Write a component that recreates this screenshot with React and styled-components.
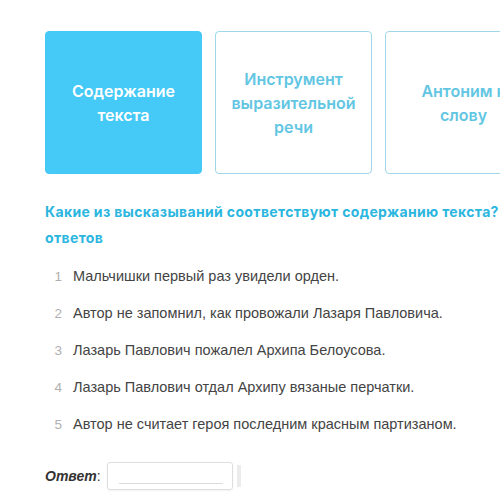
import React from "react";
import styled, { createGlobalStyle } from "styled-components";

const GlobalStyle = createGlobalStyle`
  html, body {
    margin: 0;
    padding: 0;
    background: #fff;
    overflow: hidden;
  }
`;

const Page = styled.div`
  width: 500px;
  height: 501px;
  padding: 31px 0 0 45px;
  box-sizing: border-box;
  overflow: hidden;
`;

const Tabs = styled.div`
  display: flex;
  gap: 13px;
  width: 700px;
`;

const Tab = styled.div`
  flex: 0 0 auto;
  width: 157px;
  height: 143px;
  box-sizing: border-box;
  border-radius: 4px;
  border: 1px solid ${p => (p.active ? "#45c9f6" : "#9fd8ea")};
  background: ${p => (p.active ? "#45c9f6" : "#fff")};
  color: ${p => (p.active ? "#fff" : "#62c6e3")};
  display: flex;
  align-items: center;
  justify-content: center;
  text-align: center;
  font-family: Inter, "Open Sans", sans-serif;
  font-weight: 600;
  font-size: 16px;
  line-height: 24px;
  padding: 0 17px;
`;

const Question = styled.div`
  margin-top: 25px;
  width: 480px;
  font-family: Inter, "Open Sans", sans-serif;
  font-weight: 700;
  font-size: 14px;
  letter-spacing: 0.35px;
  line-height: 26px;
  color: #2bb6df;
  white-space: nowrap;
`;

const List = styled.ol`
  list-style: none;
  margin: 7px 0 0;
  padding: 0;
`;

const Item = styled.li`
  display: flex;
  align-items: baseline;
  height: 37px;
  line-height: 37px;
  font-family: "Liberation Sans", Arial, sans-serif;
  font-size: 14.5px;
  color: #444;
`;

const Num = styled.span`
  width: 17px;
  text-align: right;
  margin-right: 11px;
  font-size: 13.5px;
  color: #b0b0b0;
`;

const Answer = styled.div`
  display: flex;
  align-items: center;
  margin-top: 19px;
  font-family: "Liberation Sans", Arial, sans-serif;
`;

const Label = styled.span`
  font-size: 14px;
  font-weight: 700;
  font-style: italic;
  color: #333;
  em {
    font-weight: 400;
    font-style: normal;
  }
`;

const Field = styled.div`
  margin-left: 6px;
  width: 126px;
  height: 28px;
  box-sizing: border-box;
  border: 1px solid #dedede;
  border-radius: 3px;
  box-shadow: 0 1px 2px rgba(0, 0, 0, 0.06);
  padding: 20px 9px 0 11px;
`;

const Underline = styled.div`
  height: 1px;
  background: #dcdcdc;
`;

const Handle = styled.div`
  margin-left: 4px;
  width: 4px;
  height: 22px;
  background: #ececec;
`;

const statements = [
  "Мальчишки первый раз увидели орден.",
  "Автор не запомнил, как провожали Лазаря Павловича.",
  "Лазарь Павлович пожалел Архипа Белоусова.",
  "Лазарь Павлович отдал Архипу вязаные перчатки.",
  "Автор не считает героя последним красным партизаном.",
];

export default function App() {
  return (
    <Page>
      <GlobalStyle />
      <Tabs>
        <Tab active>Содержание текста</Tab>
        <Tab>Инструмент выразительной речи</Tab>
        <Tab>Антоним к слову</Tab>
      </Tabs>
      <Question>
        Какие из высказываний соответствуют содержанию текста? Укажите номера
        <br />
        ответов
      </Question>
      <List>
        {statements.map((s, i) => (
          <Item key={i}>
            <Num>{i + 1}</Num>
            {s}
          </Item>
        ))}
      </List>
      <Answer>
        <Label>
          Ответ<em>:</em>
        </Label>
        <Field>
          <Underline />
        </Field>
        <Handle />
      </Answer>
    </Page>
  );
}
